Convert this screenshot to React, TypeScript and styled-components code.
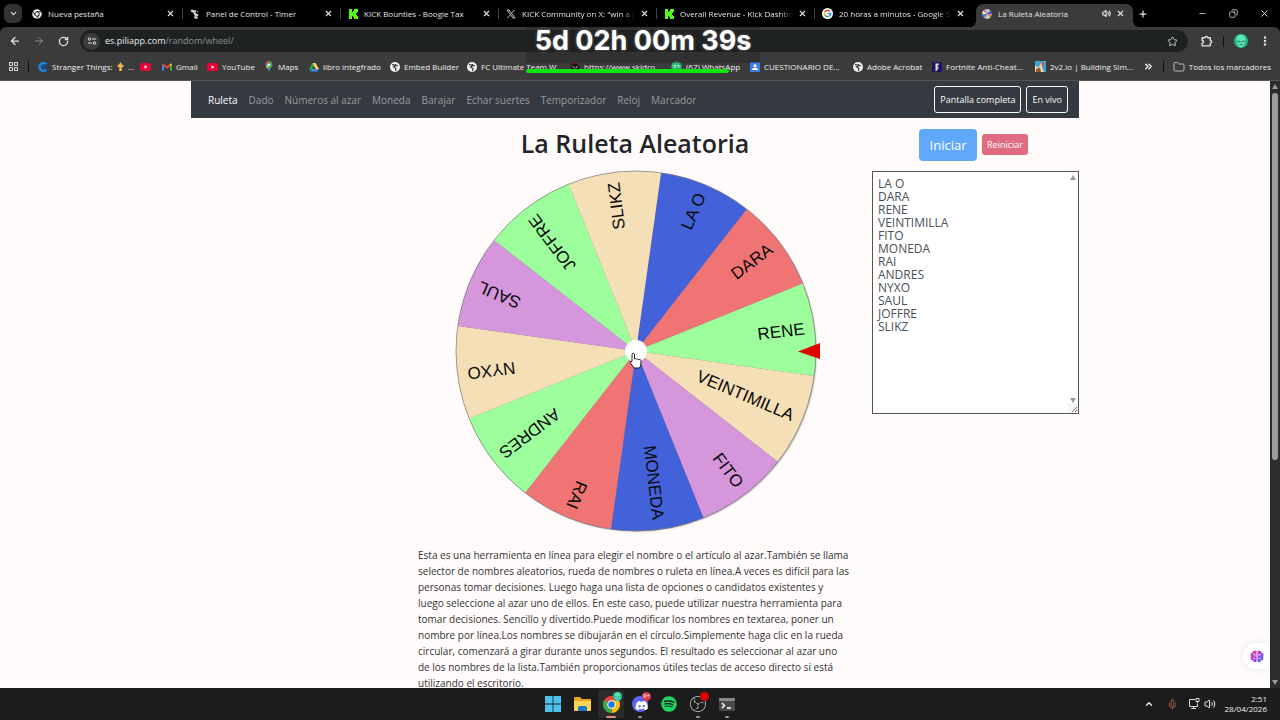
import React from "react";
import styled, { createGlobalStyle, css } from "styled-components";
import { FaDiscord, FaSpotify } from "react-icons/fa";
import { SiObsstudio } from "react-icons/si";
import {
  ArrowLeft, ArrowRight, RotateCw, X, Plus, Minus, Copy, Star, EllipsisVertical,
  ChevronDown, ChevronUp, ChevronsRight, Folder, Volume2, Mic,
} from "lucide-react";

const ui = `"Segoe UI", "Open Sans", "Noto Sans", sans-serif`;

const Global = createGlobalStyle`
  *, *::before, *::after { box-sizing: border-box; }
  body { margin: 0; font-family: ${ui}; background: #000; overflow: hidden; }
  button, textarea { font-family: inherit; margin: 0; }
  button { padding: 0; border: 0; background: none; color: inherit; cursor: pointer; }
  a { color: inherit; text-decoration: none; }
  svg { display: block; flex: none; }
`;

const Screen = styled.div`
  position: relative;
  display: flex;
  flex-direction: column;
  height: 100vh;
`;

/* ---------- tab strip ---------- */
const TabStrip = styled.header`
  display: flex;
  flex: none;
  height: 27px;
  background: #000;
  color: #e3e3e3;
`;
const TabSearch = styled.button`
  display: grid;
  place-items: center;
  flex: none;
  width: 18px;
  height: 19px;
  margin: 4px 3px 0 4px;
  border-radius: 6px;
  background: #333;
`;
const Tabs = styled.div`
  display: flex;
  flex: 0 1 1108px;
  min-width: 0;
`;
const Tab = styled.div<{ $active?: boolean; $divider?: boolean }>`
  position: relative;
  display: flex;
  align-items: center;
  flex: 1 1 0;
  min-width: 0;
  height: 23px;
  margin-top: 4px;
  padding: 0 8px 4px 7px;
  ${(p) => p.$divider && css`
    &::after {
      content: "";
      position: absolute;
      right: 0;
      top: 4px;
      width: 1px;
      height: 11px;
      background: #444;
    }
  `}
  ${(p) => p.$active && css`
    margin-left: 3px;
    background: #3b3b3b;
    border-radius: 7px 7px 0 0;
    padding-left: 6px;
    &::before, &::after {
      content: "";
      position: absolute;
      bottom: 0;
      width: 6px;
      height: 6px;
    }
    &::before { left: -6px; background: radial-gradient(circle at 0 0, transparent 6px, #3b3b3b 6px); }
    &::after { right: -6px; background: radial-gradient(circle at 100% 0, transparent 6px, #3b3b3b 6px); }
  `}
`;
const TabTitle = styled.span<{ $fade?: boolean }>`
  flex: 1;
  min-width: 0;
  margin: 0 0 0 6px;
  overflow: hidden;
  white-space: nowrap;
  font-size: 8px;
  line-height: 14px;
  ${(p) => p.$fade && css`mask-image: linear-gradient(90deg, #000 88%, transparent);`}
`;
const TabButton = styled.button`
  display: grid;
  place-items: center;
  width: 10px;
  height: 14px;
  margin-left: 4px;
`;
const NewTab = styled.button`
  display: grid;
  place-items: center;
  width: 18px;
  margin-left: 1px;
`;
const WindowControls = styled.div`
  display: flex;
  flex: none;
  align-items: center;
  margin-left: auto;
`;
const WindowButton = styled.button`
  display: grid;
  place-items: center;
  width: 31px;
  height: 27px;
`;

/* ---------- toolbar ---------- */
const Toolbar = styled.div`
  display: flex;
  flex: none;
  align-items: center;
  height: 28px;
  padding: 0 7px;
  background: #3b3b3b;
  border-radius: 6px 6px 0 0;
  color: #e3e3e3;
`;
const ToolButton = styled.button<{ $dim?: boolean }>`
  display: grid;
  place-items: center;
  flex: none;
  width: 16px;
  height: 18px;
  margin-right: 8px;
  color: ${(p) => (p.$dim ? "#8a8a8a" : "#e3e3e3")};
  &:last-child { margin-right: 0; }
`;
const Omnibox = styled.div`
  display: flex;
  flex: 1;
  align-items: center;
  min-width: 0;
  height: 22px;
  margin: 0 10px 0 1px;
  padding: 0 10px 0 3px;
  border-radius: 11px;
  background: #1f2223;
  font-size: 9px;
  line-height: 14px;
  color: #8f9192;
  b { font-weight: 400; color: #ececec; }
`;
const SiteInfo = styled.button`
  display: grid;
  place-items: center;
  width: 17px;
  height: 17px;
  margin-right: 5px;
  border-radius: 50%;
  background: #3b3b3b;
`;
const Address = styled.span`
  flex: 1;
  white-space: nowrap;
`;
const Rule = styled.span<{ $before: number; $after: number }>`
  flex: none;
  width: 1px;
  height: 11px;
  margin: 0 ${(p) => p.$after}px 0 ${(p) => p.$before}px;
  background: #111;
`;

/* ---------- bookmarks ---------- */
const Bookmarks = styled.nav`
  display: flex;
  flex: none;
  align-items: center;
  height: 26px;
  padding: 0 9px 2px 8px;
  border-bottom: 1px solid #555;
  background: #3b3b3b;
  color: #f0f0f0;
  font-size: 8px;
  line-height: 14px;
  white-space: nowrap;
`;
const Bookmark = styled.a<{ $width?: number }>`
  display: flex;
  flex: none;
  align-items: center;
  gap: 4px;
  width: ${(p) => (p.$width ? `${p.$width}px` : "auto")};
`;
const BookmarksEnd = styled.div`
  display: flex;
  align-items: center;
  margin-left: auto;
`;

/* ---------- countdown overlay ---------- */
const Countdown = styled.div`
  position: absolute;
  top: 27px;
  left: calc(50% - 114px);
  width: 234px;
  height: 46px;
  background: linear-gradient(rgba(30, 30, 30, 0.35) 36px, transparent 36px);
  color: #fff;
  font: 700 27px/28px Inter, sans-serif;
  text-align: center;
  text-shadow: 0 0 3px rgba(255, 255, 255, 0.4);
  white-space: nowrap;
`;
const CountdownBar = styled.div`
  width: 203px;
  height: 4px;
  margin-top: 14px;
  border-radius: 2px;
  background: #0be60b;
`;

/* ---------- page ---------- */
const Viewport = styled.div`
  display: flex;
  flex: 1;
  min-height: 0;
  background: #fffbfa;
`;
const Page = styled.main`
  position: relative;
  flex: 1;
  min-width: 0;
  overflow: hidden;
`;
const Container = styled.div`
  max-width: 888px;
  margin: 0 auto;
`;
const SiteNav = styled.nav`
  display: flex;
  align-items: center;
  height: 37px;
  padding: 0 11px 0 17px;
  background: #343a40;
  color: #999c9f;
  font-size: 10px;
  line-height: 16px;
  white-space: nowrap;
`;
const NavLink = styled.a<{ $current?: boolean }>`
  margin-right: 11px;
  color: ${(p) => (p.$current ? "#fff" : "inherit")};
`;
const NavButtons = styled.div`
  display: flex;
  gap: 5px;
  margin-left: auto;
`;
const OutlineButton = styled.button`
  height: 27px;
  padding: 0 5px;
  border: 1px solid #f8f9fa;
  border-radius: 3px;
  color: #f8f9fa;
  font-size: 9px;
  line-height: 14px;
`;
const Columns = styled.div`
  display: grid;
  grid-template-columns: 207px minmax(0, 1fr) 207px;
  column-gap: 20px;
`;
const Middle = styled.section`
  grid-column: 2;
`;
const Title = styled.h1`
  margin: 0;
  height: 51px;
  font-size: 25px;
  line-height: 51px;
  font-weight: 600;
  text-align: center;
  color: #212529;
  white-space: nowrap;
`;
const WheelArt = styled.svg`
  width: 100%;
  height: auto;
  text {
    font: 17px "Liberation Sans", Arial, sans-serif;
    fill: #0a0a0a;
  }
`;
const Intro = styled.p`
  margin: 12px 0 0;
  color: #333;
  font-size: 10px;
  line-height: 16px;
`;
const Side = styled.aside`
  display: flex;
  flex-direction: column;
`;
const Actions = styled.div`
  display: flex;
  align-items: center;
  justify-content: center;
  gap: 5px;
  height: 53px;
  padding-right: 4px;
`;
const ActionButton = styled.button<{ $tone: "start" | "reset" }>`
  color: #fff;
  ${(p) => p.$tone === "start"
    ? css`width: 58px; height: 32px; border-radius: 4px; background: #5fa8fa; font-size: 13px;`
    : css`width: 46px; height: 21px; border-radius: 3px; background: #e06c82; font-size: 9px;`}
`;
const NamesBox = styled.div`
  position: relative;
  height: 243px;
`;
const Names = styled.textarea`
  display: block;
  width: 100%;
  height: 100%;
  padding: 5px 14px 5px 5px;
  border: 1px solid #555;
  border-radius: 0;
  outline: 0;
  resize: none;
  overflow: hidden;
  background: #fff;
  color: #495057;
  font-size: 12px;
  line-height: 13px;
`;
const NamesScroll = styled.div`
  position: absolute;
  top: 1px;
  right: 1px;
  bottom: 1px;
  width: 10px;
  display: flex;
  flex-direction: column;
  align-items: center;
  padding-top: 3px;
`;
const NamesTrack = styled.div`
  flex: 1;
`;
const Assistant = styled.button`
  position: absolute;
  right: 0;
  bottom: 19px;
  display: grid;
  place-items: center;
  width: 27px;
  height: 26px;
  border-radius: 13px 0 0 13px;
  background: #fff;
  box-shadow: 0 0 8px rgba(0, 0, 0, 0.08);
`;
const Scrollbar = styled.div`
  display: flex;
  flex: none;
  flex-direction: column;
  align-items: center;
  width: 10px;
  padding: 3px 0;
  background: #2c2c2c;
`;
const Thumb = styled.div`
  width: 6px;
  height: 61%;
  margin: 4px 0 auto;
  border-radius: 3px;
  background: #9d9d9d;
`;

/* ---------- taskbar ---------- */
const Taskbar = styled.footer`
  display: grid;
  grid-template-columns: 1fr auto 1fr;
  flex: none;
  height: 32px;
  background: #1c1c1c;
  color: #f0f0f0;
`;
const Apps = styled.div`
  grid-column: 2;
  display: flex;
  align-items: center;
  gap: 3px;
`;
const AppButton = styled.button<{ $running?: boolean; $focused?: boolean }>`
  position: relative;
  display: grid;
  place-items: center;
  width: 26px;
  height: 28px;
  border-radius: 3px;
  background: ${(p) => (p.$focused ? "#2b2b2b" : "transparent")};
  ${(p) => (p.$running || p.$focused) && css`
    &::after {
      content: "";
      position: absolute;
      bottom: 0;
      left: 50%;
      width: ${p.$focused ? 10 : 4}px;
      height: 2px;
      border-radius: 1px;
      transform: translateX(-50%);
      background: ${p.$focused ? "#e58a80" : "#9a9a9a"};
    }
  `}
`;
const Badge = styled.span<{ $color: string }>`
  position: absolute;
  top: 2px;
  right: 2px;
  width: 9px;
  height: 9px;
  border-radius: 50%;
  background: ${(p) => p.$color};
  color: #fff;
  font-size: 6px;
  line-height: 9px;
  text-align: center;
`;
const Tray = styled.div`
  display: flex;
  align-items: center;
  justify-content: flex-end;
  padding-right: 13px;
`;
const TrayButton = styled.button<{ $gap: number }>`
  margin-right: ${(p) => p.$gap}px;
`;
const Clock = styled.time`
  width: 44px;
  font-size: 8px;
  line-height: 10px;
  text-align: right;
  white-space: nowrap;
`;

/* ---------- small icons ---------- */
const ChromeMono = () => (
  <svg width="10" height="10" viewBox="0 0 20 20">
    <circle cx="10" cy="10" r="9.5" fill="#eee" />
    <circle cx="10" cy="10" r="4.6" fill="#eee" stroke="#111" strokeWidth="1.8" />
    <path d="M10 5.4h9M6 12.3 1.6 4.8M14 12.3 9.6 19.6" stroke="#111" strokeWidth="1.6" />
  </svg>
);
const TimerLogo = () => (
  <svg width="10" height="10" viewBox="0 0 20 20" fill="#cfcfcf">
    <path d="M1 2l4-1 3 2 3-1 2 2-2 3-4 1-4-2z" />
    <path d="M7 8l4-1 3 3 3 1-1 3-4 1-4-3z" />
    <path d="M9 14l5 1 2 2-2 3-4-1-2-2z" />
    <path d="M14 4l3 0-1 3-2 0z" fill="#8a8a8a" />
  </svg>
);
const Kick = () => (
  <svg width="10" height="10" viewBox="0 0 10 10">
    <path d="M1 0h3v3h1V2h1V0h4v3H9v1H8v2h1v1h1v3H6V8H5V7H4v3H1z" fill="#53fc18" />
  </svg>
);
const XLogo = () => (
  <svg width="10" height="10" viewBox="0 0 20 20" fill="none" stroke="#ddd">
    <path d="M2 2h4l12 16h-4z" strokeWidth="1.8" />
    <path d="M17 2 11 9M9 11.500 2.500 18" strokeWidth="1.600" />
  </svg>
);
const Google = () => (
  <svg width="11" height="11" viewBox="0 0 22 22" fill="none" strokeWidth="3">
    <circle cx="11" cy="11" r="11" fill="#fff" />
    <path d="M15.500 6.500A6.400 6.400 0 0 0 5.500 8" stroke="#ea4335" />
    <path d="M5.500 8a6.400 6.400 0 0 0 0 6" stroke="#fbbc05" />
    <path d="M5.500 14a6.400 6.400 0 0 0 9.500 2" stroke="#34a853" />
    <path d="M11 11h6.400a6.400 6.400 0 0 1-2.400 5" stroke="#4285f4" />
  </svg>
);
const MiniWheel = () => (
  <svg width="10" height="10" viewBox="-10 -10 20 20">
    {["#e8c9a0", "#4361d9", "#f07474", "#9cff9c", "#d495dc", "#5b77dd", "#e9e9b0", "#c78be0"].map((c, i) => (
      <path key={i} d="M0 0V-10A10 10 0 0 1 7.070 -7.070z" fill={c} transform={`rotate(${i * 45})`} />
    ))}
  </svg>
);
const Edgey = () => (
  <svg width="10" height="10" viewBox="0 0 20 20" fill="none" strokeWidth="5">
    <path d="M17 5A8 7.500 0 1 0 17 15" stroke="#1787e0" />
    <path d="M17 5l-8 4 8 6" stroke="#1c4fa8" strokeWidth="3" />
  </svg>
);
const YouTube = () => (
  <svg width="11" height="10" viewBox="0 0 22 20">
    <rect y="2" width="22" height="16" rx="4.500" fill="#f00033" />
    <path d="M9 6.500v7l6-3.500z" fill="#fff" />
  </svg>
);
const Gmail = () => (
  <svg width="10" height="10" viewBox="0 0 20 20" fill="none" strokeWidth="4">
    <path d="M2 17V5" stroke="#4285f4" />
    <path d="M18 17V5" stroke="#34a853" />
    <path d="M2 5l8 6 8-6" stroke="#ea4335" />
    <path d="M16 6.500 19 4" stroke="#fbbc04" />
  </svg>
);
const Maps = () => (
  <svg width="10" height="11" viewBox="0 0 20 22">
    <path d="M10 22C9 16 3 13 3 7.500A7 7 0 0 1 10 0z" fill="#4285f4" />
    <path d="M10 22c1-6 7-9 7-14.500A7 7 0 0 0 10 0z" fill="#34a853" />
    <path d="M4 4a7 7 0 0 1 6-4v7z" fill="#ea4335" />
    <path d="M4 11l5-5 2 3-4.500 6z" fill="#fbbc04" />
    <circle cx="10" cy="7.500" r="2.600" fill="#fff" />
  </svg>
);
const Drive = () => (
  <svg width="10" height="10" viewBox="0 0 20 20">
    <path d="M7 2 0 14l3.500 5L10 7z" fill="#1fa463" />
    <path d="M7 2h6l7 12h-7z" fill="#ffd04b" />
    <path d="M6.500 14H20l-3.500 5h-13z" fill="#4688f4" />
  </svg>
);
const GlobeDot = () => (
  <svg width="10" height="10" viewBox="0 0 20 20">
    <circle cx="10" cy="10" r="10" fill="#f1f1f1" />
    <path d="M4 5l5 1 1 3-3 1 5 3-1 5M11 4l1 3 4 1" fill="none" stroke="#2c2c2c" strokeWidth="2.200" />
  </svg>
);
const Skull = () => (
  <svg width="10" height="10" viewBox="0 0 20 20">
    <circle cx="10" cy="10" r="9" fill="#151515" />
    <path d="M2 7a9 9 0 0 1 16 0" fill="none" stroke="#a11" strokeWidth="2" />
    <path d="M5 9l4 3M15 9l-4 3" stroke="#ddd" strokeWidth="2" />
  </svg>
);
const WhatsDot = () => (
  <svg width="11" height="11" viewBox="0 0 22 22">
    <circle cx="11" cy="11" r="10.500" fill="#2bb673" />
    <path d="M5 9h4v4M12 9h4v4M5 13h2" fill="none" stroke="#d9ffe9" strokeWidth="1.800" />
  </svg>
);
const FormIcon = () => (
  <svg width="10" height="10" viewBox="0 0 20 20">
    <rect width="20" height="20" rx="2" fill="#3f7de8" />
    <circle cx="10" cy="7.500" r="3" fill="#fff" />
    <path d="M4 16c0-6 12-6 12 0z" fill="#fff" />
  </svg>
);
const Fortnite = () => (
  <svg width="10" height="10" viewBox="0 0 20 20">
    <rect width="20" height="20" fill="#23135e" />
    <path d="M7 3h7l-1 4h-2v3h2v3h-2v4l-4 1z" fill="#ddd" />
  </svg>
);
const Building = () => (
  <svg width="11" height="11" viewBox="0 0 22 22">
    <rect width="22" height="22" fill="#3aa7d8" />
    <path d="M0 22V9l7 4 6-10 4 3-3 8 4 8z" fill="#f3d9b0" />
    <path d="M13 2l6 2-5 10z" fill="#e2492f" />
    <path d="M2 16l8-3 2 9H2z" fill="#8c5a34" />
  </svg>
);
const Flame = () => (
  <svg width="7" height="9" viewBox="0 0 14 18">
    <path d="M7 0l3 5 4 2-3 4H9l1 7H4l1-7H3L0 7l4-2z" fill="#f0b050" />
  </svg>
);
const AppsGrid = () => (
  <svg width="11" height="11" viewBox="0 0 11 11" fill="none" stroke="#ddd">
    <path d="M1.500 1.500h3v3h-3zM6.500 1.500h3v3h-3zM1.500 6.500h3v3h-3zM6.500 6.500h3v3h-3z" />
  </svg>
);
const Extension = () => (
  <svg width="13" height="13" viewBox="0 0 24 24" fill="none" stroke="#e3e3e3" strokeWidth="2.600">
    <path d="M4 5h5a2 2 0 0 1 5 0h5v5a2.500 2.500 0 0 1 0 5v5H4v-5a2.500 2.500 0 0 0 0-5z" strokeLinejoin="round" />
  </svg>
);
const Tune = () => (
  <svg width="10" height="10" viewBox="0 0 20 20" fill="none" stroke="#ddd" strokeWidth="2">
    <circle cx="5" cy="6" r="2.500" /><path d="M10 6h8" />
    <circle cx="15" cy="14" r="2.500" /><path d="M2 14h8" />
  </svg>
);
const Alien = ({ size }: { size: number }) => (
  <svg width={size} height={size} viewBox="0 0 20 20">
    <circle cx="10" cy="10" r="10" fill="#25b58a" />
    <path d="M10 1c6 0 7 5 6 10s-3 8-6 8-5-3-6-8 0-10 6-10z" fill="#5ee3b4" />
    <path d="M5 10l4 1M15 10l-4 1M8 15h4" stroke="#17765a" strokeWidth="1.500" />
  </svg>
);
const Triangle = ({ down }: { down?: boolean }) => (
  <svg width="6" height="5" viewBox="0 0 6 5">
    <path d={down ? "M0 0h6L3 5z" : "M0 5h6L3 0z"} fill="#9a9a9a" />
  </svg>
);
const Grip = () => (
  <svg width="10" height="10" viewBox="0 0 10 10">
    <rect width="10" height="10" fill="#f5f5f5" />
    <path d="M4 9 9 4M7 9l2-2" stroke="#777" />
  </svg>
);
const Brain = () => (
  <svg width="14" height="13" viewBox="0 0 28 26">
    <defs>
      <linearGradient id="brain" x1="0" y1="0" x2="1" y2="1">
        <stop offset="0" stopColor="#f0506e" /><stop offset=".5" stopColor="#b23cf0" /><stop offset="1" stopColor="#3b6cf6" />
      </linearGradient>
    </defs>
    <path d="M13 2c-4-3-8 0-8 3-4 1-5 6-3 8-2 4 0 8 4 8 1 4 6 4 7 2zM15 2c4-3 8 0 8 3 4 1 5 6 3 8 2 4 0 8-4 8-1 4-6 4-7 2z" fill="url(#brain)" />
    <path d="M6 9h4v4M22 9h-4v4M6 17h5M22 17h-5" fill="none" stroke="#fff" strokeWidth="1.300" />
  </svg>
);
const Windows = () => (
  <svg width="16" height="16" viewBox="0 0 16 16" fill="#4cc2f1">
    <path d="M0 0h7.600v7.600H0zM8.400 0H16v7.600H8.400zM0 8.400h7.600V16H0zM8.400 8.400H16V16H8.400z" />
  </svg>
);
const Explorer = () => (
  <svg width="17" height="16" viewBox="0 0 17 16">
    <path d="M0 2q0-1 1-1h5l2 2h8q1 0 1 1v10H0z" fill="#e9a820" />
    <path d="M0 5h17v9q0 1-1 1H1q-1 0-1-1z" fill="#fcd354" />
    <path d="M4 15v-3q0-2 2-2h5q2 0 2 2v3z" fill="#1a76c4" />
  </svg>
);
const Chrome = () => (
  <svg width="17" height="17" viewBox="0 0 48 48">
    <path d="M24 24 3.200 12A24 24 0 0 1 44.800 12z" fill="#ea4335" />
    <path d="M24 24l20.800-12A24 24 0 0 1 24 48z" fill="#fbbc04" />
    <path d="M24 24v24A24 24 0 0 1 3.200 12z" fill="#34a853" />
    <path d="M24 12h20.800L34 30zM3.200 12 13.600 30 24 24z" fill="#fbbc04" />
    <path d="M3.200 12 13.600 30 20 20z" fill="#34a853" />
    <path d="M3.200 12h41.600L24 13z" fill="#ea4335" />
    <circle cx="24" cy="24" r="12" fill="#fff" /><circle cx="24" cy="24" r="9" fill="#1a73e8" />
  </svg>
);
const Discord = () => (
  <svg width="16" height="16" viewBox="0 0 16 16">
    <circle cx="8" cy="8" r="8" fill="#5865f2" />
    <FaDiscord x="3" y="3" width="10" height="10" color="#fff" />
  </svg>
);
const Terminal = () => (
  <svg width="16" height="13" viewBox="0 0 16 13">
    <rect width="16" height="13" rx="1" fill="#4a4a4a" />
    <rect width="16" height="3" rx="1" fill="#8a8a8a" />
    <path d="M3 5l2.500 2.500L3 10M8 10h4" fill="none" stroke="#fff" strokeWidth="1.400" />
  </svg>
);
const Network = () => (
  <svg width="12" height="12" viewBox="0 0 12 12" fill="none" stroke="#ddd">
    <path d="M7 1.500H1.500v7h8V6M3 10.500h5M5.500 8.500v2M8 .500h3v3H8zM9.500 3.500v2" />
  </svg>
);

/* ---------- wheel ---------- */
const BLUE = "#4361d9";
const RED = "#f07474";
const GREEN = "#9cff9c";
const WHEAT = "#f4dfb6";
const PLUM = "#d596dc";

const slices = [
  { name: "LA O", color: BLUE },
  { name: "DARA", color: RED },
  { name: "RENE", color: GREEN },
  { name: "VEINTIMILLA", color: WHEAT },
  { name: "FITO", color: PLUM },
  { name: "MONEDA", color: BLUE },
  { name: "RAI", color: RED },
  { name: "ANDRES", color: GREEN },
  { name: "NYXO", color: WHEAT },
  { name: "SAUL", color: PLUM },
  { name: "JOFFRE", color: GREEN },
  { name: "SLIKZ", color: WHEAT },
];

const R = 180;
const half = Math.PI / 12;
const wedge = `M0 0L${R * Math.cos(half)} ${-R * Math.sin(half)}A${R} ${R} 0 0 1 ${R * Math.cos(half)} ${R * Math.sin(half)}z`;

function Wheel() {
  return (
    <WheelArt viewBox="-218 -182 434 366" role="img" aria-label="Ruleta">
      <defs>
        <filter id="soft" x="-10%" y="-10%" width="120%" height="120%">
          <feGaussianBlur stdDeviation="1" />
        </filter>
      </defs>
      <circle cx="1" cy="1" r={R - 1} fill="#777" filter="url(#soft)" />
      {slices.map((s, i) => (
        <g key={s.name} transform={`rotate(${-67 + i * 30})`}>
          <path d={wedge} fill={s.color} />
          <text x="170" y="4" textAnchor="end">{s.name}</text>
        </g>
      ))}
      <circle r={R} fill="none" stroke="#777" strokeWidth="0.700" />
      <circle r="11" fill="#fff" />
      <path d="M162 0.500 184 -8V8z" fill="#e00000" />
      <path
        d="M-4 3q1.500-1.500 2.500 0v5q1.200-1 2.200.300 1.200-1 2.200.300 1.600-.700 2 .900v3.500q0 2-1.500 4h-5.400l-3.500-5q-.500-2 1.500-1.500z"
        fill="#fff" stroke="#111" strokeWidth="0.900"
      />
    </WheelArt>
  );
}

const tabs = [
  { icon: <ChromeMono />, title: "Nueva pestaña" },
  { icon: <TimerLogo />, title: "Panel de Control - Timer" },
  { icon: <Kick />, title: "KICK Bounties - Boogie Tax" },
  { icon: <XLogo />, title: "KICK Community on X: \"win a g", fade: true },
  { icon: <Kick />, title: "Overall Revenue - Kick Dashbo", fade: true },
  { icon: <Google />, title: "20 horas a minutos - Google Se", fade: true },
];

const bookmarks = [
  { icon: <Edgey />, label: "Stranger Things:", extra: <><Flame />...</>, width: 102 },
  { icon: <YouTube />, label: "", width: 22 },
  { icon: <Gmail />, label: "Gmail", width: 45 },
  { icon: <YouTube />, label: "YouTube", width: 57 },
  { icon: <Maps />, label: "Maps", width: 45 },
  { icon: <Drive />, label: "libro integfrado", width: 81 },
  { icon: <GlobeDot />, label: "Embed Builder", width: 77 },
  { icon: <GlobeDot />, label: "FC Ultimate Team W...", width: 103 },
  { icon: <Skull />, label: "https://www.skidro...", width: 101 },
  { icon: <WhatsDot />, label: "(67) WhatsApp", width: 79 },
  { icon: <FormIcon />, label: "CUESTIONARIO DE...", width: 103 },
  { icon: <GlobeDot />, label: "Adobe Acrobat", width: 79 },
  { icon: <Fortnite />, label: "Fortnite Anti-Cheat...", width: 103 },
  { icon: <Building />, label: "2v2.io | Building Sim...", width: 100 },
];

const links = ["Ruleta", "Dado", "Números al azar", "Moneda", "Barajar", "Echar suertes", "Temporizador", "Reloj", "Marcador"];

export default function App() {
  return (
    <Screen>
      <Global />
      <TabStrip>
        <TabSearch aria-label="Buscar pestañas"><ChevronDown size={9} strokeWidth={3} /></TabSearch>
        <Tabs>
          {tabs.map((t, i) => (
            <Tab key={t.title} $divider={i < 5}>
              {t.icon}
              <TabTitle $fade={t.fade}>{t.title}</TabTitle>
              <TabButton aria-label="Cerrar"><X size={9} strokeWidth={3} /></TabButton>
            </Tab>
          ))}
          <Tab $active>
            <MiniWheel />
            <TabTitle>La Ruleta Aleatoria</TabTitle>
            <TabButton aria-label="Silenciar"><Volume2 size={9} strokeWidth={3} /></TabButton>
            <TabButton aria-label="Cerrar"><X size={9} strokeWidth={3} /></TabButton>
          </Tab>
        </Tabs>
        <NewTab aria-label="Nueva pestaña"><Plus size={10} strokeWidth={3} /></NewTab>
        <WindowControls>
          <WindowButton aria-label="Minimizar"><Minus size={9} /></WindowButton>
          <WindowButton aria-label="Restaurar"><Copy size={9} transform="scale(-1 1)" /></WindowButton>
          <WindowButton aria-label="Cerrar ventana"><X size={11} /></WindowButton>
        </WindowControls>
      </TabStrip>

      <Toolbar>
        <ToolButton aria-label="Atrás"><ArrowLeft size={12} strokeWidth={2.5} /></ToolButton>
        <ToolButton aria-label="Adelante" $dim><ArrowRight size={12} /></ToolButton>
        <ToolButton aria-label="Recargar"><RotateCw size={11} strokeWidth={2.8} /></ToolButton>
        <Omnibox>
          <SiteInfo aria-label="Información del sitio"><Tune /></SiteInfo>
          <Address><b>es.piliapp.com</b>/random/wheel/</Address>
          <Star size={11} color="#d0d0d0" />
        </Omnibox>
        <ToolButton aria-label="Extensiones"><Extension /></ToolButton>
        <Rule $before={1} $after={9} />
        <ToolButton aria-label="Perfil"><Alien size={14} /></ToolButton>
        <ToolButton aria-label="Menú"><EllipsisVertical size={12} strokeWidth={3} /></ToolButton>
      </Toolbar>

      <Bookmarks>
        <AppsGrid />
        <Rule $before={9} $after={9} />
        {bookmarks.map((b, i) => (
          <Bookmark key={i} href="#" $width={b.width}>
            {b.icon}
            {b.label && <span>{b.label}</span>}
            {b.extra}
          </Bookmark>
        ))}
        <BookmarksEnd>
          <ChevronsRight size={11} strokeWidth={3} />
          <Rule $before={9} $after={9} />
          <Bookmark href="#"><Folder size={12} color="#bbb" />Todos los marcadores</Bookmark>
        </BookmarksEnd>
      </Bookmarks>

      <Countdown>
        5d 02h 00m 39s
        <CountdownBar />
      </Countdown>

      <Viewport>
        <Page>
          <Container>
            <SiteNav>
              {links.map((l, i) => <NavLink key={l} href="#" $current={i === 0}>{l}</NavLink>)}
              <NavButtons>
                <OutlineButton>Pantalla completa</OutlineButton>
                <OutlineButton>En vivo</OutlineButton>
              </NavButtons>
            </SiteNav>
            <Columns>
              <Middle>
                <Title>La Ruleta Aleatoria</Title>
                <Wheel />
                <Intro>
                  Esta es una herramienta en línea para elegir el nombre o el artículo al azar.También se llama<br />
                  selector de nombres aleatorios, rueda de nombres o ruleta en línea.A veces es difícil para las<br />
                  personas tomar decisiones. Luego haga una lista de opciones o candidatos existentes y<br />
                  luego seleccione al azar uno de ellos. En este caso, puede utilizar nuestra herramienta para<br />
                  tomar decisiones. Sencillo y divertido.Puede modificar los nombres en textarea, poner un<br />
                  nombre por línea.Los nombres se dibujarán en el círculo.Simplemente haga clic en la rueda<br />
                  circular, comenzará a girar durante unos segundos. El resultado es seleccionar al azar uno<br />
                  de los nombres de la lista.También proporcionamos útiles teclas de acceso directo si está<br />
                  utilizando el escritorio.
                </Intro>
              </Middle>
              <Side>
                <Actions>
                  <ActionButton $tone="start">Iniciar</ActionButton>
                  <ActionButton $tone="reset">Reiniciar</ActionButton>
                </Actions>
                <NamesBox>
                  <Names aria-label="Nombres" spellCheck={false} defaultValue={slices.map((s) => s.name).join("\n")} />
                  <NamesScroll>
                    <Triangle />
                    <NamesTrack />
                    <Triangle down />
                    <Grip />
                  </NamesScroll>
                </NamesBox>
              </Side>
            </Columns>
          </Container>
          <Assistant aria-label="Asistente"><Brain /></Assistant>
        </Page>
        <Scrollbar>
          <Triangle />
          <Thumb />
          <Triangle down />
        </Scrollbar>
      </Viewport>

      <Taskbar>
        <Apps>
          <AppButton aria-label="Inicio"><Windows /></AppButton>
          <AppButton aria-label="Explorador"><Explorer /></AppButton>
          <AppButton aria-label="Chrome" $focused><Chrome /><Badge $color="#25b58a"><Alien size={9} /></Badge></AppButton>
          <AppButton aria-label="Discord" $running><Discord /><Badge $color="#d83c4a">9+</Badge></AppButton>
          <AppButton aria-label="Spotify"><FaSpotify size={16} color="#1ed760" /></AppButton>
          <AppButton aria-label="OBS" $running><SiObsstudio size={16} color="#ccc" /><Badge $color="#e00000" /></AppButton>
          <AppButton aria-label="Terminal" $running><Terminal /></AppButton>
        </Apps>
        <Tray>
          <TrayButton aria-label="Iconos ocultos" $gap={13}><ChevronUp size={10} strokeWidth={3} /></TrayButton>
          <TrayButton aria-label="Micrófono" $gap={10}><Mic size={11} color="#b5654e" /></TrayButton>
          <TrayButton aria-label="Red" $gap={4}><Network /></TrayButton>
          <TrayButton aria-label="Volumen" $gap={7}><Volume2 size={12} /></TrayButton>
          <Clock>2:51<br />28/04/2026</Clock>
        </Tray>
      </Taskbar>
    </Screen>
  );
}
